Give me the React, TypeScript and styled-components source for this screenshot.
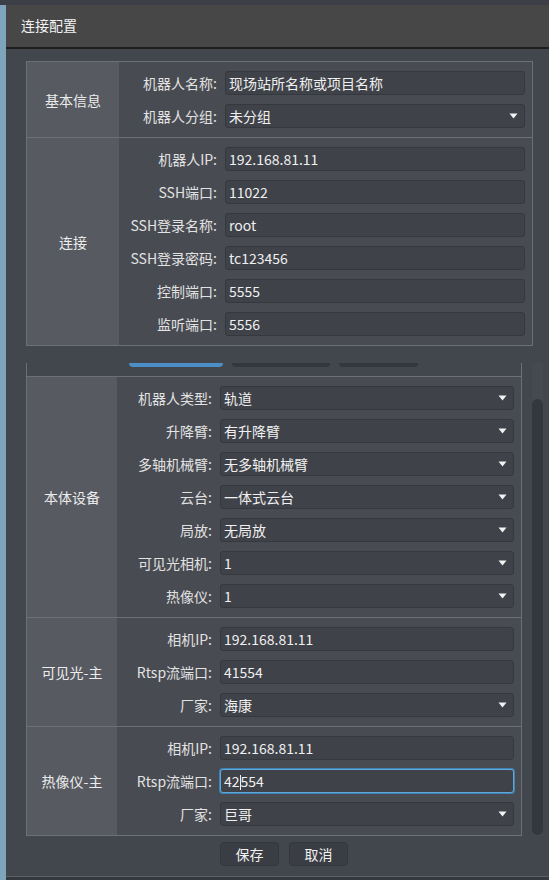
import styled, { createGlobalStyle } from 'styled-components';

const GlobalStyle = createGlobalStyle`
  html, body {
    margin: 0;
    padding: 0;
    background: #3d4046;
  }
  * {
    box-sizing: border-box;
  }
`;

const Screen = styled.div`
  width: 549px;
  height: 880px;
  display: flex;
  flex-direction: column;
  overflow: hidden;
  font-family: "Noto Sans CJK SC", "Noto Sans", sans-serif;
  font-size: 14px;
  color: #e6e6e6;
`;

const TopBand = styled.div`
  height: 5px;
  flex: none;
  background: #3c3f45;
`;

const Main = styled.div`
  flex: 1;
  display: flex;
  min-height: 0;
`;

const SideStrip = styled.div`
  width: 6px;
  flex: none;
  background: #7fa5bc;
`;

const Dialog = styled.div`
  flex: 1;
  display: flex;
  flex-direction: column;
  background: #42464d;
`;

const TitleBar = styled.div`
  height: 44px;
  flex: none;
  display: flex;
  align-items: center;
  padding: 0 0 2px 15px;
  background: #474747;
  border-bottom: 2px solid #1f1f20;
  color: #f2f2f2;
`;

const Body = styled.div`
  flex: 1;
  display: flex;
  flex-direction: column;
  padding: 12px 16px 0 20px;
  border-bottom: 1px solid #5d6066;
`;

const BottomEdge = styled.div`
  height: 3px;
  flex: none;
  background: #35383d;
`;

const Group = styled.div`
  border: 1px solid #6c6f75;
  display: flex;
  flex-direction: column;
`;

const Section = styled.div<{ $labelW: number; $last?: boolean }>`
  display: grid;
  grid-template-columns: ${(p) => p.$labelW}px 1fr;
  border-bottom: ${(p) => (p.$last ? 'none' : '1px solid #6c6f75')};
`;

const SectionLabel = styled.div`
  background: #575a61;
  display: flex;
  align-items: center;
  justify-content: center;
  color: #ececec;
`;

const Fields = styled.div`
  background: #484b52;
  display: flex;
  flex-direction: column;
  gap: 9px;
  padding: 9px 7px 9px 0;
`;

const FieldRow = styled.div<{ $labelW: number }>`
  display: grid;
  grid-template-columns: ${(p) => p.$labelW}px 1fr;
  column-gap: 8px;
  align-items: center;
  height: 24px;
`;

const FieldLabel = styled.div`
  text-align: right;
  white-space: nowrap;
  color: #e2e2e2;
`;

const InputBox = styled.div<{ $focused?: boolean }>`
  height: 24px;
  display: flex;
  align-items: center;
  padding: 0 6px 0 3px;
  background: #3f4248;
  border: 1px solid ${(p) => (p.$focused ? '#62a6da' : '#35383d')};
  box-shadow: ${(p) => (p.$focused ? '0 0 0 1px #3f82b6' : 'none')};
  border-radius: 3px;
  color: #f0f0f0;
  white-space: nowrap;
`;

const Value = styled.span`
  flex: 1;
  overflow: hidden;
`;

const Caret = styled.span`
  display: inline-block;
  width: 1px;
  height: 15px;
  margin: 0 0 -3px;
  background: #f0f0f0;
`;

const Arrow = () => (
  <svg width="9" height="6" viewBox="0 0 9 6">
    <path d="M0.5 0.5 H8.5 L4.5 5.5 Z" fill="#f2f2f2" />
  </svg>
);

const ScrollArea = styled.div`
  flex: none;
  display: flex;
  gap: 10px;
  margin-right: -12px;
  padding: 17px 2px 0 0;
`;

const ScrollContent = styled.div`
  flex: 1;
`;

const TabFrame = styled.div`
  border-left: 1px solid #6c6f75;
  border-right: 1px solid #6c6f75;
`;

const TabStubs = styled.div`
  display: flex;
  gap: 9px;
  height: 4px;
  margin: 0 0 9px 102px;
`;

const TabStub = styled.div<{ $w: number; $active?: boolean }>`
  width: ${(p) => p.$w}px;
  background: ${(p) => (p.$active ? '#4b8fc6' : '#34373d')};
  border-radius: 0 0 4px 4px;
`;

const TabGrid = styled.div`
  border-top: 1px solid #6c6f75;
  border-bottom: 1px solid #6c6f75;
`;

const ScrollTrack = styled.div`
  width: 11px;
  flex: none;
  display: flex;
  flex-direction: column;
  background: #454950;
  padding-top: 36px;
`;

const ScrollThumb = styled.div`
  flex: 1;
  margin-bottom: 1px;
  background: #34373d;
  border-radius: 6px;
`;

const ButtonRow = styled.div`
  display: flex;
  gap: 10px;
  margin-top: 6px;
  padding-left: 194px;
`;

const Button = styled.button`
  width: 59px;
  height: 24px;
  padding: 0;
  border: 1px solid #34373c;
  border-radius: 4px;
  background: #3a3d43;
  color: #f0f0f0;
  font: inherit;
`;

type Field = {
  label: string;
  value: string;
  select?: boolean;
  focused?: boolean;
};

const basic: Field[] = [
  { label: '机器人名称:', value: '现场站所名称或项目名称' },
  { label: '机器人分组:', value: '未分组', select: true },
];

const connection: Field[] = [
  { label: '机器人IP:', value: '192.168.81.11' },
  { label: 'SSH端口:', value: '11022' },
  { label: 'SSH登录名称:', value: 'root' },
  { label: 'SSH登录密码:', value: 'tc123456' },
  { label: '控制端口:', value: '5555' },
  { label: '监听端口:', value: '5556' },
];

const device: Field[] = [
  { label: '机器人类型:', value: '轨道', select: true },
  { label: '升降臂:', value: '有升降臂', select: true },
  { label: '多轴机械臂:', value: '无多轴机械臂', select: true },
  { label: '云台:', value: '一体式云台', select: true },
  { label: '局放:', value: '无局放', select: true },
  { label: '可见光相机:', value: '1', select: true },
  { label: '热像仪:', value: '1', select: true },
];

const visible: Field[] = [
  { label: '相机IP:', value: '192.168.81.11' },
  { label: 'Rtsp流端口:', value: '41554' },
  { label: '厂家:', value: '海康', select: true },
];

const thermal: Field[] = [
  { label: '相机IP:', value: '192.168.81.11' },
  { label: 'Rtsp流端口:', value: '42554', focused: true },
  { label: '厂家:', value: '巨哥', select: true },
];

function FieldInput({ f }: { f: Field }) {
  if (f.focused) {
    return (
      <InputBox $focused>
        <Value>
          {f.value.slice(0, 2)}
          <Caret />
          {f.value.slice(2)}
        </Value>
      </InputBox>
    );
  }
  return (
    <InputBox>
      <Value>{f.value}</Value>
      {f.select && <Arrow />}
    </InputBox>
  );
}

function FormSection(props: {
  title: string;
  fields: Field[];
  sectionW: number;
  labelW: number;
  last?: boolean;
}) {
  return (
    <Section $labelW={props.sectionW} $last={props.last}>
      <SectionLabel>{props.title}</SectionLabel>
      <Fields>
        {props.fields.map((f) => (
          <FieldRow key={f.label} $labelW={props.labelW}>
            <FieldLabel>{f.label}</FieldLabel>
            <FieldInput f={f} />
          </FieldRow>
        ))}
      </Fields>
    </Section>
  );
}

export default function App() {
  return (
    <Screen>
      <GlobalStyle />
      <TopBand />
      <Main>
        <SideStrip />
        <Dialog>
          <TitleBar>连接配置</TitleBar>
          <Body>
            <Group>
              <FormSection title="基本信息" fields={basic} sectionW={92} labelW={98} />
              <FormSection title="连接" fields={connection} sectionW={92} labelW={98} last />
            </Group>
            <ScrollArea>
              <ScrollContent>
                <TabFrame>
                  <TabStubs>
                    <TabStub $w={94} $active />
                    <TabStub $w={98} />
                    <TabStub $w={79} />
                  </TabStubs>
                  <TabGrid>
                    <FormSection title="本体设备" fields={device} sectionW={90} labelW={95} />
                    <FormSection title="可见光-主" fields={visible} sectionW={90} labelW={95} />
                    <FormSection title="热像仪-主" fields={thermal} sectionW={90} labelW={95} last />
                  </TabGrid>
                </TabFrame>
              </ScrollContent>
              <ScrollTrack>
                <ScrollThumb />
              </ScrollTrack>
            </ScrollArea>
            <ButtonRow>
              <Button>保存</Button>
              <Button>取消</Button>
            </ButtonRow>
          </Body>
          <BottomEdge />
        </Dialog>
      </Main>
    </Screen>
  );
}
